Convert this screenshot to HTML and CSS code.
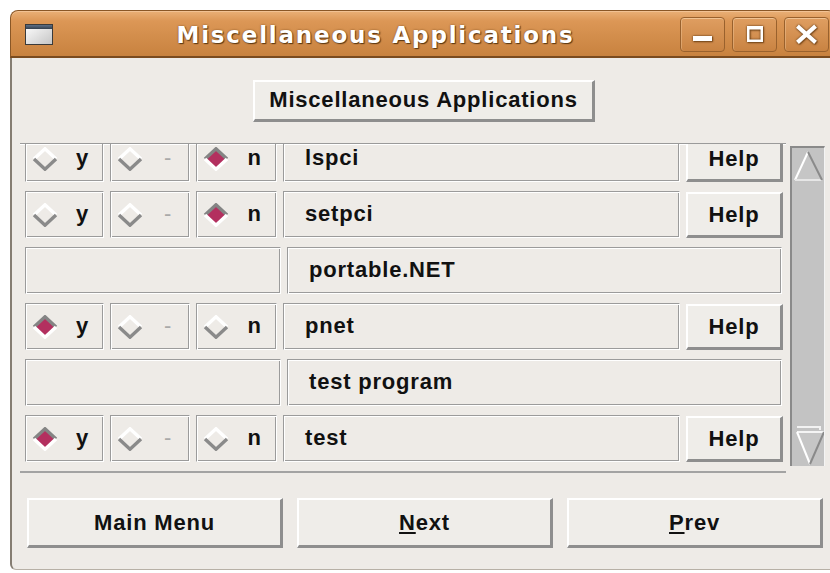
FILE: index.html
```html
<!DOCTYPE html>
<html lang="en">
<head>
<meta charset="utf-8">
<title>Miscellaneous Applications</title>
<link rel="stylesheet" href="styles.css">
</head>
<body>
<svg class="defs" width="0" height="0" aria-hidden="true">
  <defs>
    <symbol id="radio-off" viewBox="0 0 26 24">
      <path d="M2 12 L13 1.8 L24 12" fill="none" stroke="#ffffff" stroke-width="3.4"/>
      <path d="M2 12 L13 22.2 L24 12" fill="none" stroke="#8a8a8a" stroke-width="3.4"/>
    </symbol>
    <symbol id="radio-on" viewBox="0 0 26 24">
      <polygon points="13,3 23,12 13,21 3,12" fill="#b3305f"/>
      <path d="M2 12 L13 1.8 L24 12" fill="none" stroke="#848484" stroke-width="3.4"/>
      <path d="M2 12 L13 22.2 L24 12" fill="none" stroke="#ffffff" stroke-width="3.4"/>
    </symbol>
  </defs>
</svg>

<div class="window">
  <div class="titlebar">
    <svg class="app-icon" width="28" height="21" viewBox="0 0 28 21">
      <defs>
        <linearGradient id="ic-body" x1="0" y1="0" x2="1" y2="1">
          <stop offset="0" stop-color="#ffffff"/>
          <stop offset="1" stop-color="#c4c4c4"/>
        </linearGradient>
        <linearGradient id="ic-bar" x1="0" y1="0" x2="0" y2="1">
          <stop offset="0" stop-color="#5d6f86"/>
          <stop offset="1" stop-color="#34404e"/>
        </linearGradient>
      </defs>
      <rect x="0.5" y="0.5" width="27" height="20" fill="url(#ic-body)" stroke="#3a3a3a"/>
      <rect x="1" y="1" width="26" height="4" fill="url(#ic-bar)"/>
    </svg>
    <div class="title"><span>Miscellaneous Applications</span></div>
    <div class="wm-buttons">
      <div class="wm-btn">
        <svg width="45" height="35" viewBox="0 0 45 35"><rect x="13" y="19" width="19" height="5" fill="#fff"/></svg>
      </div>
      <div class="wm-btn">
        <svg width="45" height="35" viewBox="0 0 45 35"><path d="M15 9 H31 V25 H15 Z M17.5 12.5 V22.5 H28.5 V12.5 Z" fill="#fff" fill-rule="evenodd"/></svg>
      </div>
      <div class="wm-btn">
        <svg width="45" height="35" viewBox="0 0 45 35"><path d="M15 10.5 L30 24 M30 10.5 L15 24" stroke="#fff" stroke-width="4.2" stroke-linecap="square"/></svg>
      </div>
    </div>
  </div>

  <div class="client">
    <div class="header">
      <div class="tk-btn header-btn">Miscellaneous Applications</div>
    </div>

    <div class="list-area">
      <div class="viewport">
        <div class="rows">
          <div class="row">
            <div class="cell radio"><svg class="ind"><use href="#radio-off"/></svg><span class="opt">y</span></div>
            <div class="cell radio"><svg class="ind"><use href="#radio-off"/></svg><span class="opt dash">-</span></div>
            <div class="cell radio"><svg class="ind"><use href="#radio-on"/></svg><span class="opt">n</span></div>
            <div class="cell name">lspci</div>
            <div class="tk-btn help">Help</div>
          </div>
          <div class="row">
            <div class="cell radio"><svg class="ind"><use href="#radio-off"/></svg><span class="opt">y</span></div>
            <div class="cell radio"><svg class="ind"><use href="#radio-off"/></svg><span class="opt dash">-</span></div>
            <div class="cell radio"><svg class="ind"><use href="#radio-on"/></svg><span class="opt">n</span></div>
            <div class="cell name">setpci</div>
            <div class="tk-btn help">Help</div>
          </div>
          <div class="row section">
            <div class="cell"></div>
            <div class="cell name">portable.NET</div>
          </div>
          <div class="row">
            <div class="cell radio"><svg class="ind"><use href="#radio-on"/></svg><span class="opt">y</span></div>
            <div class="cell radio"><svg class="ind"><use href="#radio-off"/></svg><span class="opt dash">-</span></div>
            <div class="cell radio"><svg class="ind"><use href="#radio-off"/></svg><span class="opt">n</span></div>
            <div class="cell name">pnet</div>
            <div class="tk-btn help">Help</div>
          </div>
          <div class="row section">
            <div class="cell"></div>
            <div class="cell name">test program</div>
          </div>
          <div class="row">
            <div class="cell radio"><svg class="ind"><use href="#radio-on"/></svg><span class="opt">y</span></div>
            <div class="cell radio"><svg class="ind"><use href="#radio-off"/></svg><span class="opt dash">-</span></div>
            <div class="cell radio"><svg class="ind"><use href="#radio-off"/></svg><span class="opt">n</span></div>
            <div class="cell name">test</div>
            <div class="tk-btn help">Help</div>
          </div>
        </div>
      </div>

      <div class="scrollbar">
        <svg class="arrow-up" width="32" height="34" viewBox="0 0 32 34">
          <polygon points="16,4 30,32 3,32" fill="#c6c6c6"/>
          <path d="M16 4 L3 32" stroke="#ffffff" stroke-width="2"/>
          <path d="M3 32 H30" stroke="#e6e6e6" stroke-width="2"/>
          <path d="M16 4 L30 32" stroke="#8a8a8a" stroke-width="2"/>
        </svg>
        <svg class="arrow-down" width="32" height="42" viewBox="0 0 32 42">
          <path d="M5 3 H28 V6" fill="none" stroke="#f2f2f2" stroke-width="2"/>
          <polygon points="5,8 32,8 18,40" fill="#c6c6c6"/>
          <path d="M5 8 H32" stroke="#f4f4f4" stroke-width="2"/>
          <path d="M5 8 L18 40" stroke="#ffffff" stroke-width="2"/>
          <path d="M32 8 L18 40" stroke="#8a8a8a" stroke-width="2"/>
        </svg>
      </div>
    </div>

    <div class="nav">
      <div class="tk-btn nav-btn">Main Menu</div>
      <div class="tk-btn nav-btn"><span><u>N</u>ext</span></div>
      <div class="tk-btn nav-btn"><span><u>P</u>rev</span></div>
    </div>
  </div>
</div>
</body>
</html>
```

FILE: styles.css
```css
* {
  box-sizing: border-box;
}

html,
body {
  margin: 0;
  background: #ffffff;
  overflow: hidden;
}

body {
  width: 830px;
  height: 573px;
}

.defs {
  position: absolute;
  width: 0;
  height: 0;
}

/* ---------- window frame ---------- */

.window {
  margin: 10px 0 0 10px;
  width: 826px;
  height: 560px;
  display: flex;
  flex-direction: column;
}

.titlebar {
  height: 48px;
  flex: none;
  display: flex;
  align-items: center;
  padding: 2px 6px 0 14px;
  border: 1px solid #8a5726;
  border-bottom: 2px solid #7a4b1f;
  border-radius: 8px 8px 0 0;
  background: linear-gradient(#eab077 0%, #dc9756 22%, #d38e4c 55%, #c8823f 100%);
  box-shadow: inset 0 1px 0 #f2c293;
}

.app-icon {
  flex: none;
}

.title {
  flex: 1;
  text-align: center;
  padding-left: 18px;
  font-family: "DejaVu Sans", sans-serif;
  font-weight: bold;
  font-size: 23px;
  letter-spacing: 1.8px;
  color: #ffffff;
  text-shadow: 1px 1px 1px #5a3712, 0 0 2px rgba(90, 52, 14, 0.7);
  white-space: nowrap;
}

.wm-buttons {
  flex: none;
  display: flex;
  gap: 7px;
}

.wm-btn {
  width: 45px;
  height: 35px;
  border: 1px solid #99612d;
  border-radius: 4px;
  background: linear-gradient(#df9e61, #c98342);
  box-shadow: inset 0 1px 0 rgba(255, 226, 190, 0.55), inset 1px 0 0 rgba(255, 226, 190, 0.3);
  display: flex;
  align-items: center;
  justify-content: center;
}

.wm-btn svg {
  display: block;
  margin: -1px;
  filter: drop-shadow(0 0 1px #5a3510) drop-shadow(1px 1px 0 rgba(80, 40, 0, 0.45));
}

.client {
  flex: 1;
  background: #eeebe7;
  border-left: 2px solid #857d72;
  border-bottom: 1px solid #b7b0a6;
  border-radius: 0 0 0 6px;
  display: flex;
  flex-direction: column;
  font-family: "Liberation Sans", Arial, sans-serif;
  font-weight: bold;
  font-size: 22px;
  letter-spacing: 0.8px;
  color: #111111;
}

/* ---------- Tk widgets ---------- */

.tk-btn {
  display: flex;
  align-items: center;
  justify-content: center;
  background: #efede9;
  border-style: solid;
  border-width: 2px 3px 3px 2px;
  border-color: #ffffff #8e8e8e #8e8e8e #ffffff;
  white-space: nowrap;
}

.header {
  display: flex;
  justify-content: center;
  margin-top: 22px;
}

.header-btn {
  width: 342px;
  height: 42px;
  padding-bottom: 2px;
}

.list-area {
  display: flex;
  align-items: flex-start;
  margin-top: 21px;
  padding-left: 8px;
}

.viewport {
  width: 766px;
  height: 330px;
  overflow: hidden;
  border-top: 1px solid #9a9a9a;
  border-bottom: 2px solid #a3a3a3;
  box-shadow: inset 0 1px 0 #ffffff;
}

.rows {
  margin-top: -9px;
  padding-left: 5px;
  display: flex;
  flex-direction: column;
  gap: 9px;
}

.row {
  height: 47px;
  display: grid;
  grid-template-columns: 79px 80px 81px 397px 97px;
  column-gap: 6px;
}

.row.section {
  grid-template-columns: 256px 495px;
}

.cell {
  display: flex;
  align-items: center;
  border: 1px solid;
  border-color: #9b9b9b #ffffff #ffffff #9b9b9b;
  box-shadow: inset 1px 1px 0 #ffffff, inset -1px -1px 0 #9b9b9b;
}

.cell.name {
  padding-left: 21px;
  padding-bottom: 1px;
}

.ind {
  flex: none;
  width: 26px;
  height: 24px;
  margin-left: 6px;
}

.opt {
  flex: 1;
  text-align: center;
  padding-left: 4px;
  padding-bottom: 2px;
}

.opt.dash {
  color: #a9a9a9;
  font-weight: normal;
}

.help {
  height: 46px;
  margin-top: 1px;
}

/* ---------- scrollbar ---------- */

.scrollbar {
  margin-left: 4px;
  margin-top: 3px;
  width: 35px;
  height: 320px;
  background: #c3c3c3;
  border-style: solid;
  border-width: 2px 1px 0 2px;
  border-color: #8a8a8a #f4f4f4 #f4f4f4 #8a8a8a;
  display: flex;
  flex-direction: column;
  justify-content: space-between;
}

.scrollbar svg {
  display: block;
}

/* ---------- navigation ---------- */

.nav {
  margin-top: 25px;
  padding-left: 15px;
  display: flex;
  gap: 14px;
}

.nav-btn {
  width: 256px;
  height: 50px;
}

.nav-btn u {
  text-underline-offset: 2px;
  text-decoration-thickness: 2px;
}
```
